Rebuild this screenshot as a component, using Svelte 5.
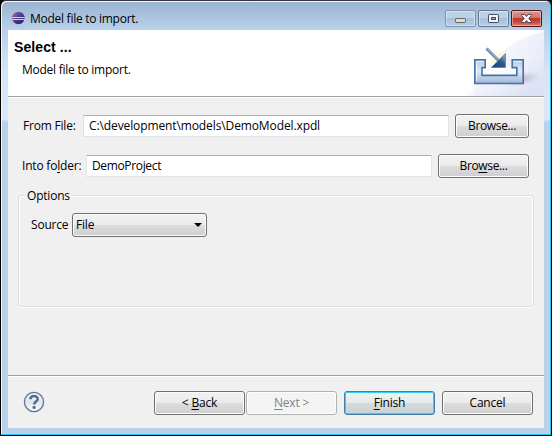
<script>
  let fromFile = $state('C:\\development\\models\\DemoModel.xpdl');
  let folder = $state('DemoProject');
</script>

<div class="window">
  <header class="titlebar">
    <svg class="logo" width="14" height="14" viewBox="0 0 14 14">
      <defs>
        <linearGradient id="ball" x1="0" y1="0" x2="1" y2="1">
          <stop offset="0" stop-color="#8478bd" />
          <stop offset="0.55" stop-color="#44388a" />
          <stop offset="1" stop-color="#241b55" />
        </linearGradient>
      </defs>
      <ellipse cx="6.2" cy="7" rx="6.1" ry="6.1" fill="#dfa3ac" />
      <circle cx="7.4" cy="7" r="6.2" fill="url(#ball)" />
      <path d="M1.3 6.5H13.6M1.3 8.5H13.6" stroke="#cbd2f0" stroke-width="1" />
    </svg>
    <span class="caption">Model file to import.</span>
    <div class="controls">
      <button class="ctl" aria-label="Minimize">
        <svg width="29" height="15" viewBox="0 0 29 15"><rect x="9.5" y="7.5" width="10" height="4" rx=".7" fill="#dedcd2" stroke="#65635f" /></svg>
      </button>
      <button class="ctl" aria-label="Maximize">
        <svg width="29" height="15" viewBox="0 0 29 15"><rect x="9.5" y="3.5" width="10" height="8" rx=".7" fill="#f5f5f5" stroke="#464b67" /><rect x="12.5" y="6.5" width="4" height="2" fill="#8daccb" stroke="#464b67" /></svg>
      </button>
      <button class="ctl close" aria-label="Close">
        <svg width="29" height="15" viewBox="0 0 29 15"><path d="M9.6 3.5H12.8L14.5 5.5L16.2 3.5H19.4V4.4L16.8 7.5L19.4 10.6V11.5H16.2L14.5 9.5L12.8 11.5H9.6V10.6L12.2 7.5L9.6 4.4Z" fill="#f5f5f5" stroke="#534a5b" /></svg>
      </button>
    </div>
  </header>

  <main>
    <section class="banner">
      <div class="headings">
        <h1>Select ...</h1>
        <p>Model file to import.</p>
      </div>
      <svg class="art" width="94" height="66" viewBox="0 0 94 66">
        <defs>
          <linearGradient id="wash" x1=".3" x2="1" y1="0" y2=".65">
            <stop offset="0" stop-color="#fff" /><stop offset="1" stop-color="#dfe5f6" />
          </linearGradient>
          <linearGradient id="wash2" x1=".25" x2="1" y1=".2" y2=".8">
            <stop offset="0" stop-color="#fff" stop-opacity=".9" /><stop offset="1" stop-color="#d8dff4" />
          </linearGradient>
          <linearGradient id="tray" x2="0" y2="1">
            <stop offset="0" stop-color="#b9cce4" /><stop offset=".5" stop-color="#dde8f4" /><stop offset="1" stop-color="#9db7d8" />
          </linearGradient>
          <linearGradient id="head" x1="0" y1="1" x2="1" y2="0">
            <stop offset="0" stop-color="#173770" /><stop offset=".55" stop-color="#31578e" /><stop offset="1" stop-color="#a8c3df" />
          </linearGradient>
          <radialGradient id="shade"><stop offset="0" stop-color="#b9a5b9" stop-opacity=".75" /><stop offset="1" stop-color="#c9bbcf" stop-opacity="0" /></radialGradient>
          <radialGradient id="glow"><stop offset="0" stop-color="#fff7b5" /><stop offset="1" stop-color="#fff9cb" stop-opacity="0" /></radialGradient>
        </defs>
        <path d="M94 1C60 10 38 28 22 66H94Z" fill="url(#wash)" />
        <path d="M94 23C60 25 38 37 16 66H94Z" fill="url(#wash2)" opacity=".65" />
        <ellipse cx="73" cy="49" rx="18" ry="7" fill="url(#shade)" transform="rotate(-12 73 49)" />
        <circle cx="48" cy="29" r="10" fill="url(#glow)" />
        <path d="M32 37H67V46H32Z" fill="#fff" fill-opacity=".7" />
        <path d="M24.8 29.8H35.2V37.6H32V45.4H66.8V37.6H62.2V29.8H73.2V53.5H24.8Z" fill="url(#tray)" stroke="#4570a8" stroke-width="1.6" />
        <path d="M26.5 31.5H33.5M26.5 32V51M64 31.5H71.5" fill="none" stroke="#fff" stroke-opacity=".65" />
        <path d="M36.5 18.5L50 32" stroke="#6388b7" stroke-width="3" />
        <path d="M37 18.5L50 31.5" stroke="#aac1dc" stroke-width="1" />
        <path d="M55.4 23.5V37.4H41.5Z" fill="url(#head)" stroke="#54779f" stroke-width=".8" />
      </svg>
    </section>

    <section class="body">
      <div class="row first">
        <label for="from" class="t from">From File:</label>
        <input id="from" class="path" bind:value={fromFile} spellcheck="false" />
        <button class="btn b1"><span>Browse...</span></button>
      </div>
      <div class="row second">
        <label for="into" class="t into">Into fo<u>l</u>der:</label>
        <input id="into" bind:value={folder} spellcheck="false" />
        <button class="btn b2"><span>Bro<u>w</u>se...</span></button>
      </div>
      <fieldset>
        <legend>Options</legend>
        <div class="source">
          <span class="src">Source</span>
          <button class="btn combo"><span>File</span>
            <svg width="8" height="4" viewBox="0 0 8 4"><path d="M0 0H8L4 4Z" fill="#000" /></svg>
          </button>
        </div>
      </fieldset>
    </section>

    <footer>
      <svg class="help" width="22" height="22" viewBox="0 0 22 22">
        <defs><linearGradient id="disc" x2="0" y2="1"><stop offset="0" stop-color="#fdfdfe" /><stop offset=".5" stop-color="#dfe2e8" /><stop offset="1" stop-color="#fff" /></linearGradient></defs>
        <circle cx="11" cy="11" r="9.6" fill="url(#disc)" stroke="#5d7598" stroke-width="1.3" />
        <path d="M7.4 8.2C7.4 3.9 14.7 3.9 14.7 8C14.7 10.7 11.2 10.5 11.2 13.5" fill="none" stroke="#536b94" stroke-width="2.5" />
        <circle cx="11.1" cy="16.4" r="1.6" fill="#536b94" />
      </svg>
      <div class="actions">
        <button class="btn"><span>&lt; <u>B</u>ack</span></button>
        <button class="btn off" disabled><span><u>N</u>ext &gt;</span></button>
        <button class="btn primary"><span><u>F</u>inish</span></button>
        <button class="btn last"><span>Cancel</span></button>
      </div>
    </footer>
  </main>
</div>

<style>
  :global(body) { background: #000; overflow: hidden; }
  * { box-sizing: border-box; }
  .window {
    width: 552px; height: 436px; padding: 0 6px 6px 6px;
    border: 1px solid #000; border-top-color: #38333d; border-radius: 6px 6px 0 0;
    background: linear-gradient(#99b4d1, #b9d1ea 29px, #d5e4f5 70px, #dce8f7 118px, #b9d1ea 121px);
    box-shadow: inset -1px -1px #27c8ee, inset 1px 1px #f1f6fb;
    font: 12px/16px "Open Sans", "Noto Sans", sans-serif; color: #000;
    letter-spacing: -0.2px;
  }
  .titlebar { height: 29px; display: flex; align-items: flex-start; padding-left: 4px; }
  .logo { margin-top: 10px; }
  .caption { margin: 10px 0 0 5px; flex: 1; letter-spacing: -0.27px; }
  .controls { display: flex; gap: 2px; margin: 9px 3px 0 0; }
  .ctl {
    width: 31px; height: 17px; padding: 0; display: flex; justify-content: center;
    border: 1px solid #8193aa; border-radius: 2px;
    background: linear-gradient(#bed0e4 0 45%, #a6bfd8 46%, #b7cee6);
    box-shadow: inset 0 0 0 1px #ffffff66;
  }
  .ctl:nth-child(2) { border-color: #65768f; }
  .ctl.close { border-color: #4b1722; background: linear-gradient(#d99a8e 0, #cf7769 45%, #ba3623 48%, #c84e35 75%, #d98170); }
  .ctl svg { flex: none; }

  main { margin: 0 0 0 1px; width: 536px; height: 398px; background: #f0f0f0; display: flex; flex-direction: column; }
  .banner { height: 68px; display: flex; justify-content: space-between; background: #fff; border-bottom: 1px solid #fff; box-shadow: inset 0 -1px #a0a0a0; flex: none; }
  .art { flex: none; }
  h1 { margin: 9px 0 0 6px; font: bold 14px/16px "Liberation Sans", Arial, sans-serif; letter-spacing: 0.1px; }
  p { margin: 7px 0 0 14px; letter-spacing: -0.25px; }

  .body { flex: 1; padding: 16px 10px 0; }
  .row { display: flex; align-items: center; height: 24px; padding-right: 5px; }
  .row .btn { letter-spacing: -0.35px; }
  .second { margin-top: 16px; }
  .t { flex: none; padding-left: 5px; white-space: nowrap; }
  .from { width: 65px; }
  .into { width: 68px; padding-left: 4px; }
  input {
    flex: 1; min-width: 0; height: 22px; padding: 0 5px 2px; color: #000; background: #fff; outline: 0;
    font: inherit; letter-spacing: -0.35px;
    border: 1px solid #e2e3ea; border-top-color: #abadb3; border-radius: 1px;
  }
  .path { letter-spacing: -0.11px; }
  .btn {
    height: 24px; width: 91px; padding: 0; display: flex; align-items: center; justify-content: center;
    font: inherit; letter-spacing: inherit; color: #000; white-space: pre;
    border: 1px solid #707070; border-radius: 3px;
    background: linear-gradient(#f2f2f2, #ebebeb 49%, #dddddd 50%, #cfcfcf);
    box-shadow: inset 0 0 0 1px #fcfcfc;
  }
  .b1 { width: 74px; margin-left: 6px; }
  .b2 { margin-left: 6px; }
  u { text-decoration-thickness: 1px; text-underline-offset: 2px; text-decoration-skip-ink: none; }

  fieldset {
    margin: 10px 0 0; padding: 0; height: 119px; min-width: 0;
    border: 1px solid #d5dfe5; border-radius: 3px; box-shadow: inset 1px 1px #fff, inset -1px 0 #fff, 0 1px #fff;
  }
  legend { margin-left: 6px; padding: 0 2px; height: 14px; background: #f0f0f0; }
  .source { display: flex; align-items: center; padding: 11px 0 0 12px; }
  .src { width: 41px; }
  .combo { width: 135px; justify-content: space-between; padding: 0 4px 0 3px; }

  footer { height: 53px; flex: none; display: flex; justify-content: space-between; align-items: flex-start; border-top: 1px solid #a0a0a0; box-shadow: inset 0 1px #fff; padding: 15px 11px 0 15px; }
  .actions { display: flex; }
  .actions .btn { margin-left: 1px; }
  .actions .primary, .actions .last { margin-left: 7px; }
  .off { color: #838383; background: #f4f4f4; border-color: #adb2b5; }
  .primary { border-color: #3c7fb1; box-shadow: inset 0 0 0 1px #33d0f6; background: linear-gradient(#f0f2f2, #e6eaeb 49%, #d5dadd 50%, #cbd1d4); }
</style>
